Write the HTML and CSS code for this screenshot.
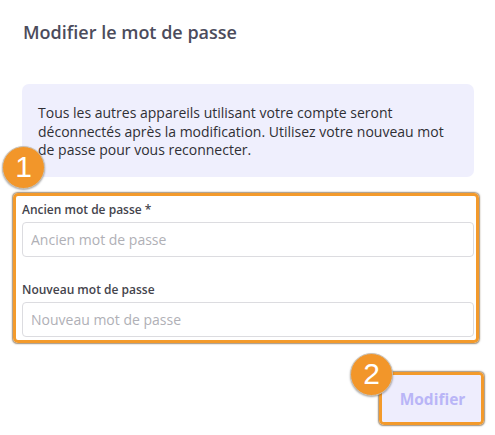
FILE: index.html
```html
<!DOCTYPE html>
<html lang="fr">
<head>
<meta charset="utf-8">
<link rel="stylesheet" href="styles.css">
</head>
<body>
<div class="dialog">
  <h2 class="title">Modifier le mot de passe</h2>
  <div class="info">Tous les autres appareils utilisant votre compte seront déconnectés après la modification. Utilisez votre nouveau mot de passe pour vous reconnecter.</div>
  <div class="form-wrap">
    <span class="badge badge-1">1</span>
    <div class="highlight form-hl">
      <label class="label">Ancien mot de passe *</label>
      <input class="input" type="password" placeholder="Ancien mot de passe">
      <label class="label label-2">Nouveau mot de passe</label>
      <input class="input" type="password" placeholder="Nouveau mot de passe">
    </div>
  </div>
  <div class="actions">
    <div class="btn-wrap">
      <span class="badge badge-2">2</span>
      <div class="highlight btn-hl">
        <button class="btn">Modifier</button>
      </div>
    </div>
  </div>
</div>
</body>
</html>
```
FILE: styles.css
```css
* { box-sizing: border-box; }
html, body { margin: 0; padding: 0; background: #fff; }
body { font-family: "Open Sans", "Noto Sans", sans-serif; width: 495px; height: 435px; overflow: hidden; }
.dialog { padding: 20px 21px 0 22px; }
.title { margin: 0; font-size: 18px; line-height: 24px; font-weight: 600; color: #4c4c5c; padding-left: 1px; }
.info {
  margin-top: 40px;
  background: #efeffd;
  border-radius: 7px;
  padding: 20px 16px 17px 16px;
  font-size: 14px;
  line-height: 18.7px;
  color: #2f2f35;
}
.form-wrap { position: relative; margin-top: 16px; }
.highlight {
  border: 3px solid #f39a2b;
  border-radius: 5px;
  box-shadow: 0 0 1.5px 0.5px rgba(80, 50, 10, 0.55);
}
.form-hl { margin-left: -9px; margin-right: -5px; padding: 6px 2px 3px 6px; display: flex; flex-direction: column; }
.label { font-size: 12px; line-height: 16px; font-weight: 600; color: #44444c; }
.label-2 { margin-top: 25px; }
.input {
  margin-top: 4px;
  height: 35px;
  width: 100%;
  border: 1px solid #dcdce0;
  border-radius: 4px;
  padding: 0 8px;
  font-family: inherit;
  font-size: 14px;
  color: #333;
  background: #fff;
  outline: none;
}
.input::placeholder { color: #b0b0b6; }
.actions { display: flex; justify-content: flex-end; margin-top: 29px; margin-right: -10px; }
.btn-wrap { position: relative; }
.btn-hl { width: 105px; height: 53px; padding: 0; }
.btn {
  display: block;
  width: 100%; height: 100%;
  border: 0;
  border-radius: 2px;
  background: #eeedfd;
  color: #b9b5f7;
  font-family: inherit;
  font-weight: 700;
  font-size: 15.5px;
  padding: 0 0 0 2px;
}
.badge {
  position: absolute;
  width: 43px; height: 43px;
  border-radius: 50%;
  background: #f2962a;
  border: 1.5px solid #c9c2b8;
  box-shadow: 0 1px 2px rgba(0,0,0,0.35);
  color: #fff;
  font-family: "Liberation Sans", Arial, sans-serif;
  font-size: 30px;
  line-height: 40px;
  text-align: center;
  z-index: 2;
}
.badge-1 { left: -20px; top: -47px; }
.badge-2 { left: -29px; top: -19px; }
```
